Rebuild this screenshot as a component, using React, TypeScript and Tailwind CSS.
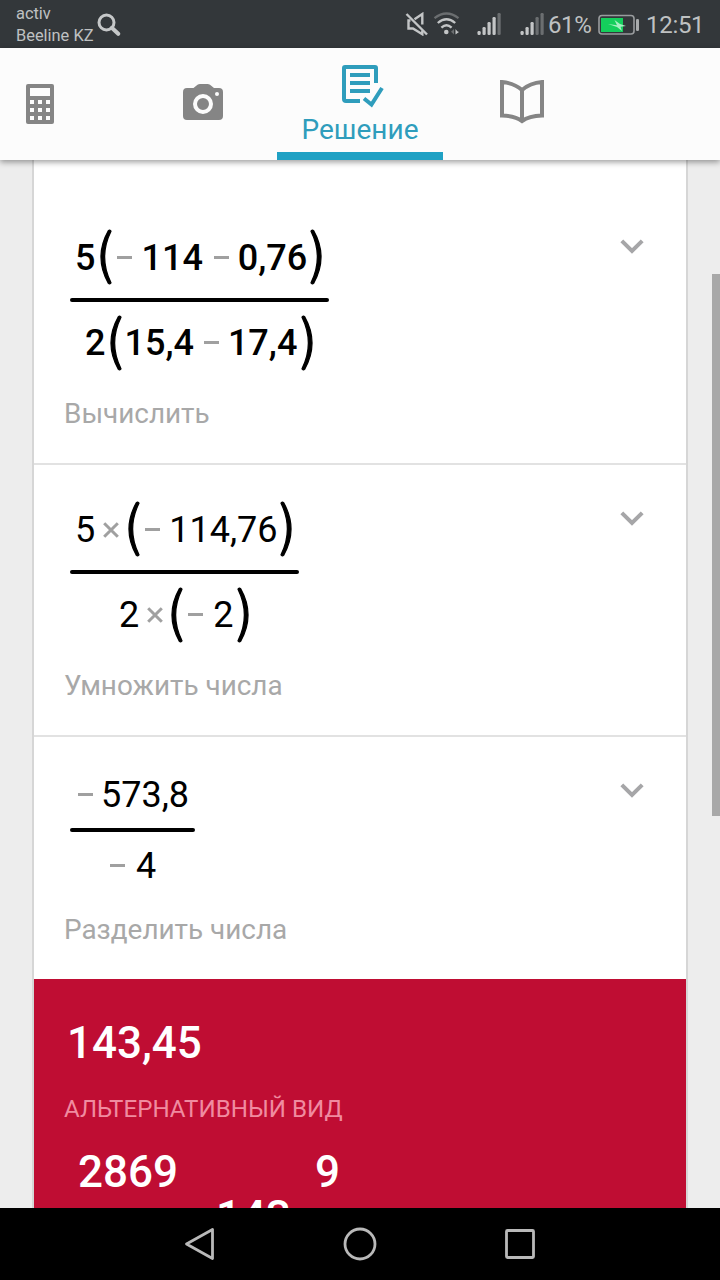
import clsx from "clsx";
import type { ReactNode } from "react";

const Minus = ({ className }: { className?: string }) => (
    <span className={clsx("-mt-0.5 block h-[3px] w-[15px] shrink-0 bg-[#a0a0a0]", className)} />
);

const Times = ({ className }: { className?: string }) => (
    <svg viewBox="0 0 16 16" className={clsx("h-4 w-4 shrink-0", className)} fill="none" stroke="#a0a0a0" strokeWidth="3">
        <path d="M1.2 1.2 14.8 14.8M14.8 1.2 1.2 14.8" />
    </svg>
);

const Paren = ({ right, className }: { right?: boolean; className?: string }) => (
    <svg
        viewBox="0 0 12 56"
        className={clsx("h-14 w-3 shrink-0", right && "-scale-x-100", className)}
        fill="#000"
        stroke="#000"
        strokeWidth="1.2"
        strokeLinejoin="round"
    >
        <path d="M8.4 1.6Q-6.5 28 8.4 54.4Q9.8 55.6 11 53.8Q-1.7 28 11 2.2Q9.8.4 8.4 1.6Z" />
    </svg>
);

const Chevron = ({ className }: { className?: string }) => (
    <svg viewBox="0 0 24 16" className={clsx("h-4 w-6 shrink-0", className)} fill="none" stroke="#a6a6a8" strokeWidth="4">
        <path d="M1.8 1.8 12 12 22.2 1.8" />
    </svg>
);

interface FractionProps {
    top: ReactNode;
    bottom: ReactNode;
    className?: string;
    rowClassName?: string;
}

const Fraction = ({ top, bottom, className, rowClassName }: FractionProps) => (
    <div className={clsx("flex flex-col text-4xl leading-none text-black", className)}>
        <div className={clsx("flex items-center pl-[5px]", rowClassName)}>{top}</div>
        <div className="h-1 rounded-xs bg-black" />
        <div className={clsx("flex items-center", rowClassName)}>{bottom}</div>
    </div>
);

interface StepProps {
    label: string;
    className?: string;
    chevronClassName?: string;
    children: ReactNode;
}

const Step = ({ label, className, chevronClassName = "mt-2.5", children }: StepProps) => (
    <section className={clsx("flex shrink-0 flex-col justify-between pr-[42px] pl-[30px]", className)}>
        <div className="flex items-start justify-between pl-1.5">
            {children}
            <Chevron className={chevronClassName} />
        </div>
        <p className="text-[27.9px] leading-8 text-[#a8a8a8]">{label}</p>
    </section>
);

const Signal = ({ level, className }: { level: number; className?: string }) => (
    <svg viewBox="0 0 24 24" className={clsx("h-6 w-6 shrink-0", className)}>
        {[4, 8, 13, 18, 22].map((h, i) => (
            <rect key={h} x={0.5 + i * 5} y={23 - h} width="3.2" height={h} rx="1.2" fill={i < level ? "#c3c5c6" : "#6b6e70"} />
        ))}
    </svg>
);

const StatusBar = () => (
    <div className="flex h-12 shrink-0 items-start bg-[#33373a] text-[#bfc1c2]">
        <div className="w-[97px] pt-[3px] pl-4 text-[16.4px] leading-[22px] whitespace-nowrap">
            <p>activ</p>
            <p>Beeline KZ</p>
        </div>
        <svg viewBox="0 0 24 24" className="mt-[13px] h-6 w-6" fill="none" stroke="#c5c7c8">
            <circle cx="9.5" cy="9.5" r="7.5" strokeWidth="3" />
            <path d="m14.8 14.8 6.4 6" strokeWidth="4" strokeLinecap="round" />
        </svg>
        <svg viewBox="0 0 24 24" className="mt-3 ml-[284px] h-6 w-6" fill="none" stroke="#c3c5c6" strokeWidth="2.4">
            <path d="M1.5 2 22 22.5" />
            <path d="M9.5 7.2 17.3 2V12.5M5.5 8.5H3.5V16.5H8L17.3 22.2V18.5" />
        </svg>
        <svg viewBox="0 0 28 24" className="mt-3 ml-1 h-6 w-7" fill="none" stroke="#c3c5c6" strokeWidth="2.3">
            <path d="M1.5 6.2Q13.5-3.2 25.5 6.2" stroke="#6b6e70" />
            <path d="M4.8 11Q13.5 3.4 22.2 11" />
            <path d="M8.4 15.6Q13.5 10.8 18.6 15.6" />
            <circle cx="13.3" cy="20" r="2.3" fill="#c3c5c6" stroke="none" />
            <path d="M21 17v5.5l-3-2.7z" fill="#6b6e70" stroke="none" />
            <path d="M22.5 17v5.5l3.5-2.4-1.7-.8z" fill="#c3c5c6" stroke="none" />
        </svg>
        <Signal level={4} className="mt-3 ml-4" />
        <Signal level={3} className="mt-3 ml-[19px]" />
        <span className="mt-[11px] ml-1 w-[50px] text-2xl leading-7 tracking-[-0.4px]">61%</span>
        <svg viewBox="0 0 42 22" className="mt-3.5 h-[22px] w-[42px]" fill="none">
            <rect x="1" y="1.5" width="35" height="18.5" rx="3" stroke="#999c9e" strokeWidth="1.6" />
            <rect x="3" y="4" width="22" height="14" fill="#14cf5c" />
            <path d="m10 10 9 1.200L16.5 6l5.5 4 6 2-5.500.8L24 17l-5-4z" fill="#a5efc1" />
            <rect x="38" y="5" width="3" height="12" rx="1.2" fill="#a9acad" />
        </svg>
        <span className="mt-[11px] ml-1.5 text-2xl leading-7 tracking-[-0.3px]">12:51</span>
    </div>
);

const TabBar = () => (
    <nav className="relative z-10 flex h-28 shrink-0 bg-[#fcfcfc] shadow-[0_2px_6px_rgba(0,0,0,0.4)]">
        <div className="flex w-[129px] shrink-0 items-start pt-9 pl-[26px]">
            <svg viewBox="0 0 28 40" className="h-10 w-7">
                <rect width="28" height="40" rx="2" fill="#858585" />
                <rect x="4" y="4" width="20" height="8" fill="#fcfcfc" />
                {[16, 24, 32].map((y) =>
                    [4, 12, 20].map((x) => <rect key={`${x}-${y}`} x={x} y={y} width="4" height="4" fill="#fcfcfc" />)
                )}
            </svg>
        </div>
        <div className="flex w-[148px] shrink-0 items-start justify-center pt-9">
            <svg viewBox="0 0 40 36" className="h-9 w-10">
                <path d="M4 4h6.5l4-3.2Q15.5 0 17 0h7.5q1.5 0 2.5.8L31 4h5q4 0 4 4v24q0 4-4 4H4q-4 0-4-4V8q0-4 4-4z" fill="#858585" />
                <circle cx="20" cy="20" r="8" fill="none" stroke="#fcfcfc" strokeWidth="4" />
                <circle cx="34" cy="10" r="2" fill="#fcfcfc" />
            </svg>
        </div>
        <div className="flex w-[166px] shrink-0 flex-col items-center justify-between pt-4 text-[#2f9dbc]">
            <svg viewBox="0 0 42 44" className="ml-1.5 h-11 w-[42px] shrink-0" fill="none" stroke="currentColor" strokeWidth="4">
                <path d="M18 37H4q-2 0-2-2V4q0-1 1-1h30q1 0 1 1v15M8 11h20M8 19h20M8 27h20M22 34.5l7.5 6L40 24" />
            </svg>
            <span className="text-[28px] leading-8">Решение</span>
            <div className="h-2 w-full shrink-0 bg-[#1fa1c4]" />
        </div>
        <div className="flex flex-1 items-start pt-8 pl-[57px]">
            <svg viewBox="0 0 44 44" className="h-11 w-11" fill="none" stroke="#858585" strokeWidth="4">
                <path d="M2 2Q14 3 22 10Q30 3 42 2V35.5Q29 36 22 41Q15 36 2 35.5ZM22 10V41" />
            </svg>
        </div>
    </nav>
);

const NavBar = () => (
    <div className="flex h-[72px] shrink-0 items-center justify-center gap-[126px] bg-black">
        <svg viewBox="0 0 34 34" className="h-[34px] w-[34px]" fill="none" stroke="#b9b9b9" strokeWidth="2.8" strokeLinejoin="round">
            <path d="M29.5 2.5v29L3.5 17z" />
        </svg>
        <svg viewBox="0 0 34 34" className="h-[34px] w-[34px]" fill="none" stroke="#b9b9b9" strokeWidth="2.8">
            <circle cx="17" cy="17" r="15" />
        </svg>
        <svg viewBox="0 0 34 34" className="h-[34px] w-[34px]" fill="none" stroke="#b9b9b9" strokeWidth="2.8">
            <rect x="3.5" y="3.5" width="27" height="27" rx="1" />
        </svg>
    </div>
);

const App = () => (
    <div className="flex h-[1280px] w-[720px] flex-col overflow-hidden bg-[#ededed] font-['Roboto',sans-serif]">
        <StatusBar />
        <TabBar />

        <main className="relative min-h-0 flex-1 overflow-hidden px-8">
            <div className="flex h-full flex-col border-x-2 border-[#d6d6d6] bg-white">
                <Step label="Вычислить" className="h-[305px] border-b-2 border-[#e2e2e2] pt-[69px] pb-[33px]">
                    <Fraction
                        className="w-[259px] font-medium"
                        rowClassName="h-[58px] mb-[11px] last:mt-[12px] last:mb-0"
                        top={
                            <>
                                <span>5</span>
                                <Paren className="-mt-0.5 ml-[5px]" />
                                <Minus className="ml-[5px]" />
                                <span className="ml-[9px]">114</span>
                                <Minus className="ml-[11px]" />
                                <span className="ml-[9px]">0,76</span>
                                <Paren right className="-mt-0.5 ml-[3px]" />
                            </>
                        }
                        bottom={
                            <>
                                <span className="ml-[15px]">2</span>
                                <Paren className="ml-[5px]" />
                                <span className="ml-0.5">15,4</span>
                                <Minus className="ml-2.5" />
                                <span className="ml-[9px]">17,4</span>
                                <Paren right className="ml-1" />
                            </>
                        }
                    />
                </Step>

                <Step label="Умножить числа" className="h-[272px] border-b-2 border-[#e2e2e2] pt-9 pb-[33px]">
                    <Fraction
                        className="w-[229px]"
                        rowClassName="h-[58px] mb-[11px] last:mt-[12px] last:mb-0"
                        top={
                            <>
                                <span>5</span>
                                <Times className="ml-2" />
                                <Paren className="-mt-0.5 ml-[9px]" />
                                <Minus className="ml-[5px]" />
                                <span className="ml-[9px]">114,76</span>
                                <Paren right className="-mt-0.5 ml-[3px]" />
                            </>
                        }
                        bottom={
                            <>
                                <span className="ml-[49px]">2</span>
                                <Times className="ml-2" />
                                <Paren className="ml-2" />
                                <Minus className="ml-[5px]" />
                                <span className="ml-2.5">2</span>
                                <Paren right className="ml-1" />
                            </>
                        }
                    />
                </Step>

                <Step label="Разделить числа" className="h-[242px] pt-[35px] pb-[33px]" chevronClassName="mt-[11px]">
                    <Fraction
                        className="w-[125px]"
                        rowClassName="h-[46px] mb-[10px] last:mt-[11px] last:mb-0"
                        top={
                            <>
                                <Minus className="ml-[3px]" />
                                <span className="ml-2">573,8</span>
                            </>
                        }
                        bottom={
                            <>
                                <Minus className="ml-10" />
                                <span className="ml-[11px]">4</span>
                            </>
                        }
                    />
                </Step>

                <section className="min-h-0 flex-1 overflow-hidden bg-[#bf0d33] pt-[41px] pl-[30px] text-white">
                    <p className="pl-[3px] text-[44px] leading-[46px] font-medium">143,45</p>
                    <p className="mt-[29px] text-[24.15px] leading-7 text-[#f08ba0]">АЛЬТЕРНАТИВНЫЙ ВИД</p>
                    <div className="mt-[26px] flex items-start pl-3.5 text-[44px] leading-[46px] font-medium">
                        <span className="w-[138px]">2869</span>
                        <span className="mt-[45px] w-[99px]">143</span>
                        <span>9</span>
                    </div>
                </section>
            </div>
            <div className="absolute top-[114px] right-0 h-[542px] w-2 bg-[#a8a8a8]" />
        </main>

        <NavBar />
    </div>
);

export default App;
